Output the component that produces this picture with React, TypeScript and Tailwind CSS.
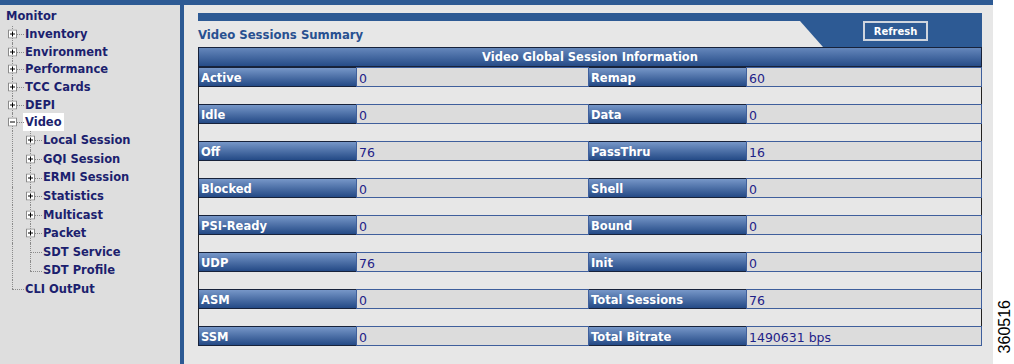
import React from 'react';

type Row = [string, string, string, string];

const sessionRows: Row[] = [
  ['Active', '0', 'Remap', '60'],
  ['Idle', '0', 'Data', '0'],
  ['Off', '76', 'PassThru', '16'],
  ['Blocked', '0', 'Shell', '0'],
  ['PSI-Ready', '0', 'Bound', '0'],
  ['UDP', '76', 'Init', '0'],
  ['ASM', '0', 'Total Sessions', '76'],
  ['SSM', '0', 'Total Bitrate', '1490631 bps'],
];

const topItems = ['Inventory', 'Environment', 'Performance', 'TCC Cards', 'DEPI'];
const videoItems: { label: string; box: boolean }[] = [
  { label: 'Local Session', box: true },
  { label: 'GQI Session', box: true },
  { label: 'ERMI Session', box: true },
  { label: 'Statistics', box: true },
  { label: 'Multicast', box: true },
  { label: 'Packet', box: true },
  { label: 'SDT Service', box: false },
  { label: 'SDT Profile', box: false },
];

function ToggleBox({ open = false }: { open?: boolean }) {
  return (
    <svg width="9" height="9" viewBox="0 0 9 9" className="absolute left-[8px] top-1/2 -translate-y-1/2">
      <rect x="0.5" y="0.5" width="8" height="8" fill="#ffffff" stroke="#8a8a8a" />
      <path d="M2 4.5h5" stroke="#000" strokeWidth="1" />
      {!open && <path d="M4.5 2v5" stroke="#000" strokeWidth="1" />}
    </svg>
  );
}

// one column of tree connector lines, 25px wide with the trunk at x=12
function Gutter({ trunk, branch, box, open, half }: { trunk: boolean; branch: boolean; box?: boolean; open?: boolean; half?: boolean }) {
  return (
    <div className="relative w-[25px] shrink-0 self-stretch">
      {trunk && (
        <div className={`absolute left-[12px] top-0 border-l border-dotted border-[#8a8a8a] ${half ? 'bottom-1/2' : 'bottom-0'}`} />
      )}
      {branch && <div className="absolute left-[12px] right-[1px] top-1/2 border-t border-dotted border-[#8a8a8a]" />}
      {box && <ToggleBox open={open} />}
    </div>
  );
}

function Sidebar() {
  return (
    <div className="w-[180px] shrink-0 bg-[#dedede] pt-[3.5px] text-[11.5px] font-bold text-[#1c1f6e]">
      <div className="flex h-[17px] items-end pl-[6px]">Monitor</div>
      {topItems.map((label) => (
        <div key={label} className="flex h-[17.6px] items-center">
          <Gutter trunk branch box />
          <span className="pt-[1px]">{label}</span>
        </div>
      ))}
      <div className="flex h-[17.6px] items-center">
        <Gutter trunk branch box open />
        <span className="-ml-[2px] bg-white px-[2px] pt-[1px] leading-[17px]">Video</span>
      </div>
      {videoItems.map((item, i) => (
        <div key={item.label} className="flex h-[18.6px] items-center">
          <div className="relative w-[18px] shrink-0 self-stretch">
            <div className="absolute bottom-0 left-[12px] top-0 border-l border-dotted border-[#8a8a8a]" />
          </div>
          <Gutter trunk branch box={item.box} half={i === videoItems.length - 1} />
          <span className="pt-[1px]">{item.label}</span>
        </div>
      ))}
      <div className="flex h-[18.6px] items-center">
        <Gutter trunk branch half />
        <span className="pt-[1px]">CLI OutPut</span>
      </div>
    </div>
  );
}

function LabelCell({ text, w, first }: { text: string; w: string; first?: boolean }) {
  return (
    <div
      className={`${w} flex shrink-0 items-center border-y border-[#17223a] bg-gradient-to-b from-[#7797c8] to-[#244a86] pl-[2px] pt-[4px] text-[11.5px] font-bold text-white ${first ? 'border-l' : ''}`}
    >
      {text}
    </div>
  );
}

function ValueCell({ text, w }: { text: string; w: string }) {
  return (
    <div className={`${w} flex items-center border border-[#3f5f9c] bg-[#dcdcdc] pl-[2px] pt-[4px] text-[12.5px] text-[#1f2288]`}>
      {text}
    </div>
  );
}

export default function App() {
  return (
    <div className="flex h-[364px] w-[1014px] overflow-hidden bg-white font-['DejaVu_Sans',Verdana,sans-serif]">
      <div className="flex w-[993px] shrink-0 flex-col">
        <div className="h-[5px] bg-[#2d5a94]" />
        <div className="flex flex-1">
          <Sidebar />
          <div className="w-[4px] shrink-0 bg-[#2d5a94]" />
          <div className="flex-1 bg-[#e7e7e7] pl-[14px] pr-[11px] pt-[8px]">
            <div className="h-[8px] bg-[#2d5a94]" />
            <div className="flex h-[26px]">
              <div className="flex flex-1 items-center pt-[3px] text-[11.7px] font-bold text-[#285090]">
                Video Sessions Summary
              </div>
              <div className="flex w-[182px] items-start justify-end bg-[#2d5a94] pr-[54px] [clip-path:polygon(0_0,100%_0,100%_100%,23px_100%)]">
                <button className="h-[20px] w-[65px] border-2 border-[#cfd5de] bg-[#2d5a94] pt-[1px] text-[10px] font-bold text-white">
                  Refresh
                </button>
              </div>
            </div>
            <div>
              <div className="flex h-[20px] items-center justify-center border border-[#17223a] bg-gradient-to-b from-[#6587bb] to-[#264c88] pt-[2px] text-[11.5px] font-bold text-white">
                Video Global Session Information
              </div>
              {sessionRows.map(([l1, v1, l2, v2], i) => (
                <React.Fragment key={l1}>
                  {i > 0 && <div className="h-[17px] border-x border-[#222222]" />}
                  <div className="flex h-[20px]">
                    <LabelCell text={l1} w="w-[158px]" first />
                    <ValueCell text={v1} w="w-[233px] shrink-0" />
                    <LabelCell text={l2} w="w-[157px]" />
                    <ValueCell text={v2} w="flex-1" />
                  </div>
                </React.Fragment>
              ))}
            </div>
          </div>
        </div>
      </div>
      <div className="flex flex-1 items-end justify-center pb-[11px]">
        <span className="rotate-180 font-['Liberation_Sans',Arial,sans-serif] text-[16px] text-black [writing-mode:vertical-rl]">
          360516
        </span>
      </div>
    </div>
  );
}
